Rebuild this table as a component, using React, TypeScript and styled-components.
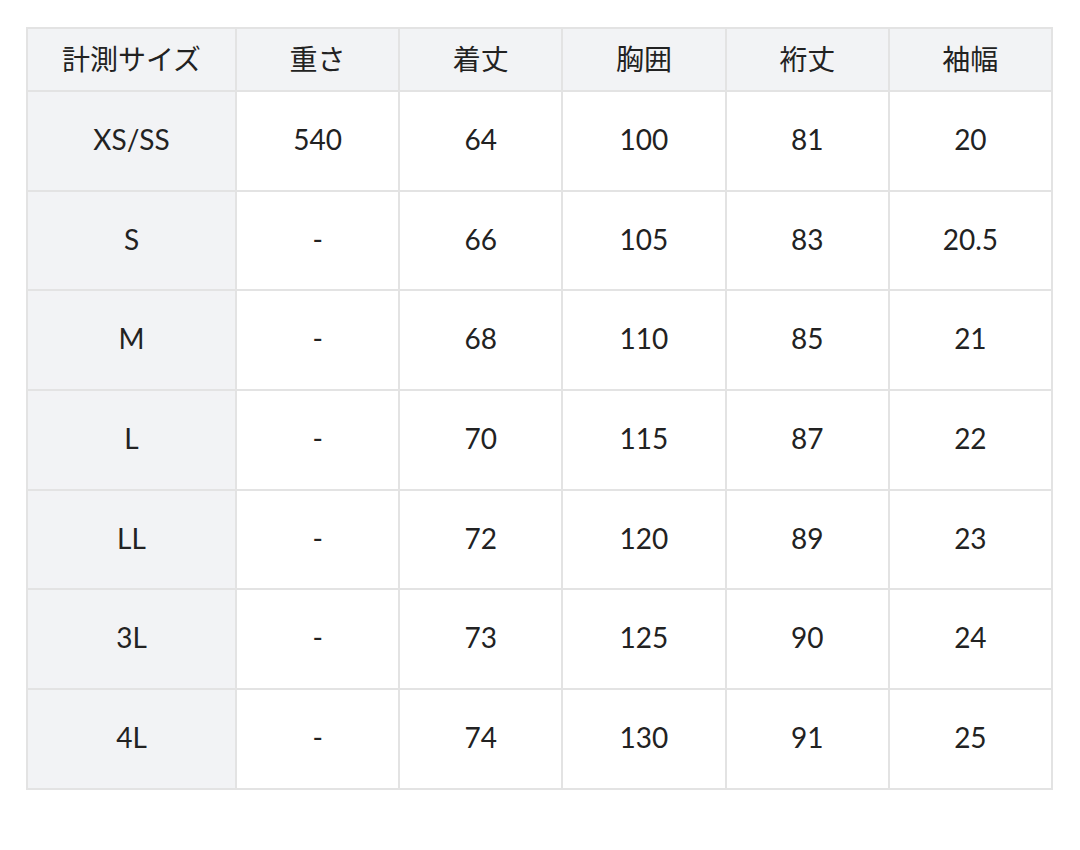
import styled, { createGlobalStyle } from "styled-components";

const GlobalStyle = createGlobalStyle`
  html, body {
    margin: 0;
    padding: 0;
    background: #fff;
  }
  body {
    font-family: Lato, "Noto Sans CJK JP", sans-serif;
    color: #1a1a1a;
  }
`;

const Page = styled.div`
  padding: 27px 26px;
`;

const Table = styled.table`
  width: 1027px;
  border-collapse: collapse;
  table-layout: fixed;
  border: 2px solid #e3e3e3;
`;

const Cell = styled.td<{ $head?: boolean; $label?: boolean }>`
  border: 2px solid #e3e3e3;
  text-align: center;
  vertical-align: middle;
  font-size: 28px;
  height: ${(p) => (p.$head ? "57px" : "93.7px")};
  padding: 0 0 4px;
  background: ${(p) => (p.$head || p.$label ? "#f2f3f5" : "#fff")};
  font-family: ${(p) =>
    p.$head ? '"Noto Sans CJK JP", sans-serif' : 'Lato, "Noto Sans CJK JP", sans-serif'};
  font-weight: 400;
  color: #222;
`;

const headers = ["計測サイズ", "重さ", "着丈", "胸囲", "裄丈", "袖幅"];

const rows: string[][] = [
  ["XS/SS", "540", "64", "100", "81", "20"],
  ["S", "-", "66", "105", "83", "20.5"],
  ["M", "-", "68", "110", "85", "21"],
  ["L", "-", "70", "115", "87", "22"],
  ["LL", "-", "72", "120", "89", "23"],
  ["3L", "-", "73", "125", "90", "24"],
  ["4L", "-", "74", "130", "91", "25"],
];

const App = () => {
  return (
    <Page>
      <GlobalStyle />
      <Table>
        <colgroup>
          <col style={{ width: "209px" }} />
          <col />
          <col />
          <col />
          <col />
          <col />
        </colgroup>
        <thead>
          <tr>
            {headers.map((h) => (
              <Cell as="th" key={h} $head>
                {h}
              </Cell>
            ))}
          </tr>
        </thead>
        <tbody>
          {rows.map((row) => (
            <tr key={row[0]}>
              {row.map((v, i) => (
                <Cell key={i} $label={i === 0}>
                  {v}
                </Cell>
              ))}
            </tr>
          ))}
        </tbody>
      </Table>
    </Page>
  );
};

export default App;
